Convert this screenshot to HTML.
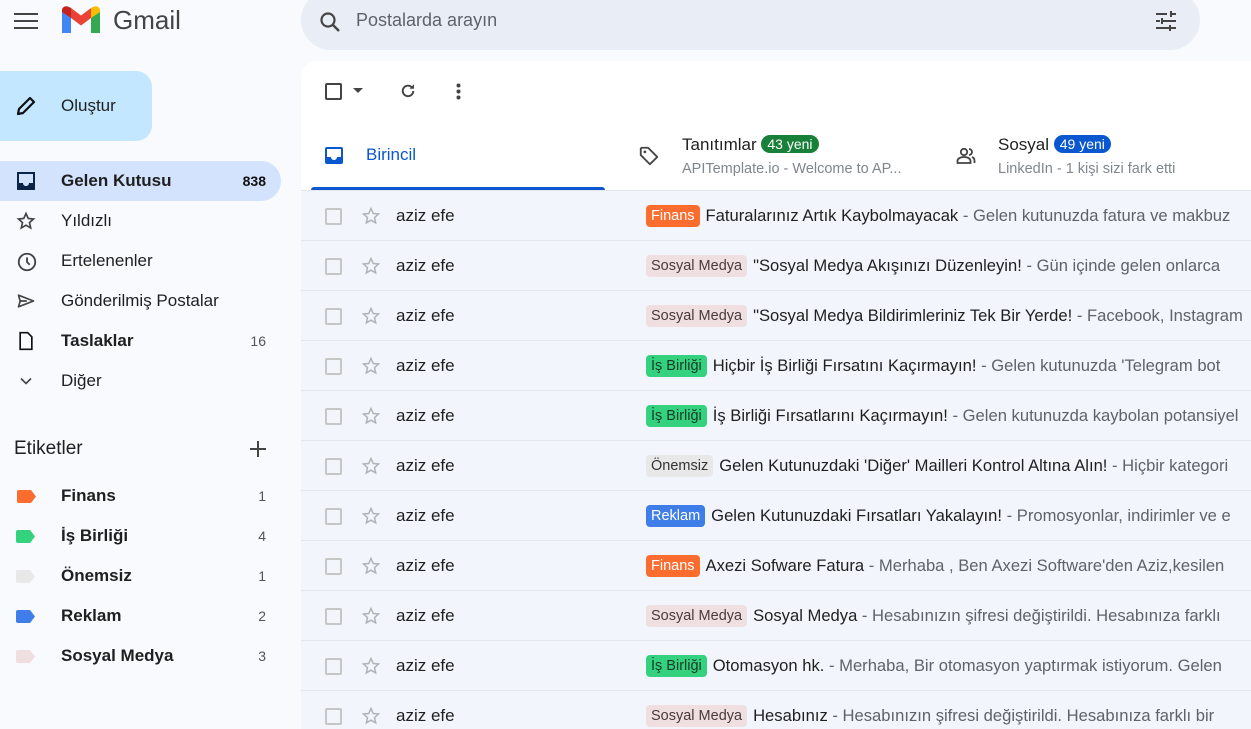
<!DOCTYPE html>
<html><head><meta charset="utf-8"><style>
*{box-sizing:border-box;margin:0;padding:0}
html,body{width:1251px;height:729px;overflow:hidden}
body{background:#f8fafd;font-family:"Liberation Sans","Noto Sans CJK JP",sans-serif;color:#1f1f1f;position:relative}
.abs{position:absolute}
.search{left:301px;top:-10px;width:899px;height:60px;background:#e9eef6;border-radius:30px}
.main{left:301px;top:61px;width:960px;height:668px;background:#fff;border-radius:16px 0 0 0;overflow:hidden}
.nav{position:absolute;left:0;width:281px;height:40px;border-radius:0 20px 20px 0;font-size:17px;line-height:40px}
.nav .t{position:absolute;left:61px}
.nav .c{position:absolute;right:15px;font-size:14px;color:#555;font-weight:normal}
.nav svg{position:absolute;left:16px;top:10px}
.row{position:absolute;left:0;width:960px;height:50px;background:#f2f6fc;border-bottom:1px solid #e3e6ea;font-size:16.6px;line-height:50px;white-space:nowrap}
.cb{position:absolute;left:24px;top:17px;width:17px;height:17px;border:2px solid #c4c7c5;border-radius:2px}
.star{position:absolute;left:60px;top:15px}
.snd{position:absolute;left:95px;color:#1f1f1f;font-size:17px}
.sub{position:absolute;left:345px;color:#1f1f1f}
.sub .g{color:#5f6368}
.lb{display:inline-block;font-size:14.5px;line-height:22px;padding:0 5px;border-radius:4px;margin-right:6px;vertical-align:1px}
.fin{background:#fb6c2f;color:#fff}.sm{background:#f0dfe1;color:#4a3a3c}.ib{background:#34d17f;color:#1a3a26}.on{background:#e8e8e8;color:#333}.rk{background:#3f7ee8;color:#fff}
.tag{position:absolute;left:17px;width:19px;height:13px}
</style></head><body>
<svg class="abs" style="left:14px;top:11px" width="24" height="20"><path d="M0 3h24M0 10h24M0 17h24" stroke="#444" stroke-width="2"/></svg>
<svg class="abs" style="left:62px;top:6px" width="38" height="29" viewBox="0 0 38 29"><path d="M0 4v23h9V12z" fill="#4285f4"/><path d="M29 12v15h9V4z" fill="#34a853"/><path d="M29 2v10l9-6V4c0-3-4-5-7-3z" fill="#fbbc04"/><path d="M9 12V2l10 7.5L29 2v10l-10 7.5z" fill="#ea4335"/><path d="M0 4v2l9 6V2L7 1C4-1 0 1 0 4z" fill="#c5221f"/></svg>
<div class="abs" style="left:113px;top:5px;font-size:26px;color:#444">Gmail</div>
<div class="abs search"></div>
<svg class="abs" style="left:318px;top:10px" width="24" height="24" viewBox="0 0 24 24"><circle cx="10" cy="10" r="6.5" fill="none" stroke="#444" stroke-width="2.2"/><path d="M15 15l6 6" stroke="#444" stroke-width="2.4"/></svg>
<div class="abs" style="left:356px;top:10px;font-size:18px;color:#5f6368">Postalarda arayın</div>
<svg class="abs" style="left:1154px;top:9px" width="24" height="24" viewBox="0 0 24 24" fill="#444"><path d="M2 4h11v2H2zM16 2h2v6h-2zM18 4h4v2h-4zM2 11h4v2H2zM7 9h2v6H7zM9 11h13v2H9zM2 18h13v2H2zM15 16h2v6h-2zM17 18h5v2h-5z"/></svg>
<div class="abs" style="left:0;top:71px;width:152px;height:70px;background:#c2e7ff;border-radius:0 16px 16px 0"></div>
<svg class="abs" style="left:14px;top:94px" width="24" height="24" viewBox="0 0 24 24"><path d="M4 20l1-5L16 4l4 4L9 19z" fill="none" stroke="#111" stroke-width="2.2" stroke-linejoin="round"/></svg>
<div class="abs" style="left:61px;top:96px;font-size:17px">Oluştur</div>
<div class="nav" style="top:161px;background:#d3e3fd;font-weight:bold"><svg width="20" height="20" viewBox="0 0 20 20"><path d="M1 1h18v18H1z" fill="#0b2447"/><path d="M3 3h14v9h-4c0 2-1.5 3-3 3s-3-1-3-3H3z" fill="#d3e3fd"/></svg><span class="t">Gelen Kutusu</span><span class="c" style="color:#111;font-weight:bold">838</span></div>
<div class="nav" style="top:201px"><svg width="20" height="20" viewBox="0 0 24 24"><path d="M12 3l2.7 6 6.3.6-4.8 4.3 1.4 6.4L12 17l-5.6 3.3 1.4-6.4L3 9.6 9.3 9z" fill="none" stroke="#444" stroke-width="2"/></svg><span class="t">Yıldızlı</span></div>
<div class="nav" style="top:241px"><svg width="22" height="22" viewBox="0 0 24 24"><circle cx="12" cy="12" r="9" fill="none" stroke="#444" stroke-width="2"/><path d="M12 7v5l3 3" fill="none" stroke="#444" stroke-width="2"/></svg><span class="t">Ertelenenler</span></div>
<div class="nav" style="top:281px"><svg width="20" height="20" viewBox="0 0 24 24"><path d="M3 5l18 7-18 7 2-7zM5 12h8" fill="none" stroke="#444" stroke-width="2" stroke-linejoin="round"/></svg><span class="t">Gönderilmiş Postalar</span></div>
<div class="nav" style="top:321px;font-weight:bold"><svg width="20" height="20" viewBox="0 0 24 24"><path d="M5 2h9l5 5v15H5z" fill="none" stroke="#111" stroke-width="2"/></svg><span class="t">Taslaklar</span><span class="c">16</span></div>
<div class="nav" style="top:361px"><svg width="20" height="20" viewBox="0 0 24 24"><path d="M6 9l6 6 6-6" fill="none" stroke="#444" stroke-width="2"/></svg><span class="t">Diğer</span></div>
<div class="abs" style="left:14px;top:438px;font-size:19px">Etiketler</div>
<svg class="abs" style="left:249px;top:440px" width="18" height="18"><path d="M9 1v16M1 9h16" stroke="#444" stroke-width="2"/></svg>
<div class="nav" style="top:476px;font-weight:bold"><svg class="tag" style="top:14px;left:17px" width="19" height="13"><path d="M0 2Q0 0 2 0h12l5 6.5-5 6.5H2Q0 13 0 11z" fill="#fb6c2f"/></svg><span class="t">Finans</span><span class="c">1</span></div>
<div class="nav" style="top:516px;font-weight:bold"><svg class="tag" style="top:14px" width="19" height="13"><path d="M0 2Q0 0 2 0h12l5 6.5-5 6.5H2Q0 13 0 11z" fill="#34d17f"/></svg><span class="t">İş Birliği</span><span class="c">4</span></div>
<div class="nav" style="top:556px;font-weight:bold"><svg class="tag" style="top:14px" width="19" height="13"><path d="M0 2Q0 0 2 0h12l5 6.5-5 6.5H2Q0 13 0 11z" fill="#e8e8e8"/></svg><span class="t">Önemsiz</span><span class="c">1</span></div>
<div class="nav" style="top:596px;font-weight:bold"><svg class="tag" style="top:14px" width="19" height="13"><path d="M0 2Q0 0 2 0h12l5 6.5-5 6.5H2Q0 13 0 11z" fill="#3f7ee8"/></svg><span class="t">Reklam</span><span class="c">2</span></div>
<div class="nav" style="top:636px;font-weight:bold"><svg class="tag" style="top:14px" width="19" height="13"><path d="M0 2Q0 0 2 0h12l5 6.5-5 6.5H2Q0 13 0 11z" fill="#f0dfe1"/></svg><span class="t">Sosyal Medya</span><span class="c">3</span></div>

<div class="abs main">
<div class="abs" style="left:24px;top:22px;width:17px;height:17px;border:2px solid #444;border-radius:2px"></div>
<svg class="abs" style="left:52px;top:27px" width="10" height="6"><path d="M0 0h10L5 5z" fill="#444"/></svg>
<svg class="abs" style="left:98px;top:21px" width="18" height="18" viewBox="0 0 24 24"><path d="M19 12a7 7 0 1 1-2-5" fill="none" stroke="#444" stroke-width="2.6"/><path d="M20 3v6h-6z" fill="#444"/></svg>
<svg class="abs" style="left:155px;top:22px" width="5" height="17"><circle cx="2.5" cy="2.5" r="2" fill="#444"/><circle cx="2.5" cy="8.5" r="2" fill="#444"/><circle cx="2.5" cy="14.5" r="2" fill="#444"/></svg>
<svg class="abs" style="left:24px;top:86px" width="18" height="17" viewBox="0 0 18 17"><rect width="18" height="17" rx="2" fill="#0b57d0"/><path d="M2 2h14v8h-4c0 1.5-1.3 3-3 3s-3-1.5-3-3H2z" fill="#fff"/></svg>
<div class="abs" style="left:65px;top:84px;font-size:17px;color:#0b57d0">Birincil</div>
<div class="abs" style="left:10px;top:126px;width:294px;height:4px;background:#0b57d0;border-radius:3px 3px 0 0"></div>
<svg class="abs" style="left:337px;top:84px" width="22" height="22" viewBox="0 0 24 24"><path d="M3 4v7l10 10 8-8L11 3H4z" fill="none" stroke="#444" stroke-width="2" stroke-linejoin="round"/><circle cx="7.5" cy="7.5" r="1.5" fill="#444"/></svg>
<div class="abs" style="left:381px;top:74px;font-size:17px">Tanıtımlar <span style="background:#188038;color:#fff;font-size:14px;border-radius:9px;padding:1px 6px;vertical-align:1px">43 yeni</span></div>
<div class="abs" style="left:381px;top:100px;font-size:14.5px;color:#80868b">APITemplate.io - Welcome to AP...</div>
<svg class="abs" style="left:655px;top:86px" width="20" height="18" viewBox="0 0 20 18"><circle cx="8" cy="5" r="3.2" fill="none" stroke="#444" stroke-width="1.8"/><path d="M1.5 16v-2c0-2.5 3-4 6.5-4s6.5 1.5 6.5 4v2z" fill="none" stroke="#444" stroke-width="1.8"/><path d="M13 2a3 3 0 0 1 0 6M16 10c1.5.5 2.5 2 2.5 4v2" fill="none" stroke="#444" stroke-width="1.8"/></svg>
<div class="abs" style="left:697px;top:74px;font-size:17px">Sosyal <span style="background:#0b57d0;color:#fff;font-size:14px;border-radius:9px;padding:1px 6px;vertical-align:1px">49 yeni</span></div>
<div class="abs" style="left:697px;top:100px;font-size:14.5px;color:#80868b">LinkedIn - 1 kişi sizi fark etti</div>
<div class="abs" style="left:0;top:129px;width:960px;height:1px;background:#e3e6ea"></div>

<div class="row" style="top:130px"><div class="cb"></div><svg class="star" width="20" height="20" viewBox="0 0 24 24"><path d="M12 3l2.7 6 6.3.6-4.8 4.3 1.4 6.4L12 17l-5.6 3.3 1.4-6.4L3 9.6 9.3 9z" fill="none" stroke="#b0b3b6" stroke-width="1.8"/></svg><span class="snd">aziz efe</span><span class="sub"><span class="lb fin">Finans</span>Faturalarınız Artık Kaybolmayacak <span class="g">- Gelen kutunuzda fatura ve makbuz</span></span></div>
<div class="row" style="top:180px"><div class="cb"></div><svg class="star" width="20" height="20" viewBox="0 0 24 24"><path d="M12 3l2.7 6 6.3.6-4.8 4.3 1.4 6.4L12 17l-5.6 3.3 1.4-6.4L3 9.6 9.3 9z" fill="none" stroke="#b0b3b6" stroke-width="1.8"/></svg><span class="snd">aziz efe</span><span class="sub"><span class="lb sm">Sosyal Medya</span>"Sosyal Medya Akışınızı Düzenleyin! <span class="g">- Gün içinde gelen onlarca</span></span></div>
<div class="row" style="top:230px"><div class="cb"></div><svg class="star" width="20" height="20" viewBox="0 0 24 24"><path d="M12 3l2.7 6 6.3.6-4.8 4.3 1.4 6.4L12 17l-5.6 3.3 1.4-6.4L3 9.6 9.3 9z" fill="none" stroke="#b0b3b6" stroke-width="1.8"/></svg><span class="snd">aziz efe</span><span class="sub"><span class="lb sm">Sosyal Medya</span>"Sosyal Medya Bildirimleriniz Tek Bir Yerde! <span class="g">- Facebook, Instagram</span></span></div>
<div class="row" style="top:280px"><div class="cb"></div><svg class="star" width="20" height="20" viewBox="0 0 24 24"><path d="M12 3l2.7 6 6.3.6-4.8 4.3 1.4 6.4L12 17l-5.6 3.3 1.4-6.4L3 9.6 9.3 9z" fill="none" stroke="#b0b3b6" stroke-width="1.8"/></svg><span class="snd">aziz efe</span><span class="sub"><span class="lb ib">İş Birliği</span>Hiçbir İş Birliği Fırsatını Kaçırmayın! <span class="g">- Gelen kutunuzda 'Telegram bot</span></span></div>
<div class="row" style="top:330px"><div class="cb"></div><svg class="star" width="20" height="20" viewBox="0 0 24 24"><path d="M12 3l2.7 6 6.3.6-4.8 4.3 1.4 6.4L12 17l-5.6 3.3 1.4-6.4L3 9.6 9.3 9z" fill="none" stroke="#b0b3b6" stroke-width="1.8"/></svg><span class="snd">aziz efe</span><span class="sub"><span class="lb ib">İş Birliği</span>İş Birliği Fırsatlarını Kaçırmayın! <span class="g">- Gelen kutunuzda kaybolan potansiyel</span></span></div>
<div class="row" style="top:380px"><div class="cb"></div><svg class="star" width="20" height="20" viewBox="0 0 24 24"><path d="M12 3l2.7 6 6.3.6-4.8 4.3 1.4 6.4L12 17l-5.6 3.3 1.4-6.4L3 9.6 9.3 9z" fill="none" stroke="#b0b3b6" stroke-width="1.8"/></svg><span class="snd">aziz efe</span><span class="sub"><span class="lb on">Önemsiz</span>Gelen Kutunuzdaki 'Diğer' Mailleri Kontrol Altına Alın! <span class="g">- Hiçbir kategori</span></span></div>
<div class="row" style="top:430px"><div class="cb"></div><svg class="star" width="20" height="20" viewBox="0 0 24 24"><path d="M12 3l2.7 6 6.3.6-4.8 4.3 1.4 6.4L12 17l-5.6 3.3 1.4-6.4L3 9.6 9.3 9z" fill="none" stroke="#b0b3b6" stroke-width="1.8"/></svg><span class="snd">aziz efe</span><span class="sub"><span class="lb rk">Reklam</span>Gelen Kutunuzdaki Fırsatları Yakalayın! <span class="g">- Promosyonlar, indirimler ve e</span></span></div>
<div class="row" style="top:480px"><div class="cb"></div><svg class="star" width="20" height="20" viewBox="0 0 24 24"><path d="M12 3l2.7 6 6.3.6-4.8 4.3 1.4 6.4L12 17l-5.6 3.3 1.4-6.4L3 9.6 9.3 9z" fill="none" stroke="#b0b3b6" stroke-width="1.8"/></svg><span class="snd">aziz efe</span><span class="sub"><span class="lb fin">Finans</span>Axezi Sofware Fatura <span class="g">- Merhaba , Ben Axezi Software'den Aziz,kesilen</span></span></div>
<div class="row" style="top:530px"><div class="cb"></div><svg class="star" width="20" height="20" viewBox="0 0 24 24"><path d="M12 3l2.7 6 6.3.6-4.8 4.3 1.4 6.4L12 17l-5.6 3.3 1.4-6.4L3 9.6 9.3 9z" fill="none" stroke="#b0b3b6" stroke-width="1.8"/></svg><span class="snd">aziz efe</span><span class="sub"><span class="lb sm">Sosyal Medya</span>Sosyal Medya <span class="g">- Hesabınızın şifresi değiştirildi. Hesabınıza farklı</span></span></div>
<div class="row" style="top:580px"><div class="cb"></div><svg class="star" width="20" height="20" viewBox="0 0 24 24"><path d="M12 3l2.7 6 6.3.6-4.8 4.3 1.4 6.4L12 17l-5.6 3.3 1.4-6.4L3 9.6 9.3 9z" fill="none" stroke="#b0b3b6" stroke-width="1.8"/></svg><span class="snd">aziz efe</span><span class="sub"><span class="lb ib">İş Birliği</span>Otomasyon hk. <span class="g">- Merhaba, Bir otomasyon yaptırmak istiyorum. Gelen</span></span></div>
<div class="row" style="top:630px"><div class="cb"></div><svg class="star" width="20" height="20" viewBox="0 0 24 24"><path d="M12 3l2.7 6 6.3.6-4.8 4.3 1.4 6.4L12 17l-5.6 3.3 1.4-6.4L3 9.6 9.3 9z" fill="none" stroke="#b0b3b6" stroke-width="1.8"/></svg><span class="snd">aziz efe</span><span class="sub"><span class="lb sm">Sosyal Medya</span>Hesabınız <span class="g">- Hesabınızın şifresi değiştirildi. Hesabınıza farklı bir</span></span></div>
</div>
</body></html>
